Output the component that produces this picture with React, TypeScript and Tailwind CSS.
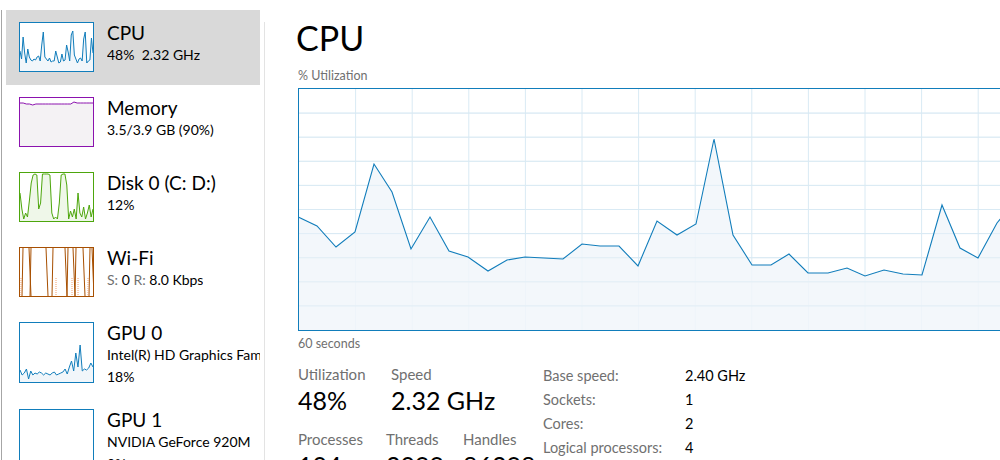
import type { ReactNode } from "react";

const FONT = { fontFamily: '"Segoe UI", Lato, "Noto Sans", sans-serif' };

// main graph points, page coords
const cpuPoints: [number, number][] = [
  [298, 217], [317, 226], [336, 247], [355, 232], [374, 164], [392, 192],
  [411, 249], [430, 217], [449, 251], [468, 257], [488, 271], [507, 260],
  [525, 257], [544, 258], [563, 259], [582, 244], [600, 246], [619, 246],
  [638, 266], [657, 221], [677, 235], [696, 224], [714, 139], [733, 235],
  [752, 265], [771, 265], [789, 254], [808, 273], [828, 273], [847, 268],
  [865, 276], [884, 270], [903, 274], [922, 275], [942, 205], [960, 248],
  [978, 258], [997, 223], [1016, 200],
];

const toLine = (pts: [number, number][]) => pts.map((p) => p.join(",")).join(" ");

const toArea = (pts: [number, number][], bottom: number) =>
  `${pts[0][0]},${bottom} ${toLine(pts)} ${pts[pts.length - 1][0]},${bottom}`;

// small thumbnail series (x across 0..73, y 0..48)
const spread = (ys: number[], w = 73): [number, number][] =>
  ys.map((y, i) => [(i * w) / (ys.length - 1), y]);

const cpuThumb = spread([
  28, 36, 14, 30, 40, 26, 34, 37, 38, 36, 37, 34, 33, 38, 22, 9, 34, 36,
  38, 35, 39, 38, 38, 28, 34, 40, 39, 31, 38, 37, 22, 29, 38, 12, 8, 32,
  36, 40, 36, 35, 38, 16, 9, 40, 38, 37, 15, 30,
]);
const memThumb = spread([5, 5, 6, 6, 7, 6, 6, 6, 6, 6, 6, 6, 6, 6, 6, 6, 6, 4, 5, 5, 5, 5, 5, 5]);
const diskThumb = spread([
  20, 36, 46, 40, 44, 28, 10, 2, 1, 2, 36, 30, 1, 1, 1, 1, 2, 40, 46, 44,
  46, 30, 2, 1, 1, 12, 46, 38, 44, 36, 46, 20, 40, 44, 34, 46, 40, 32, 44, 36,
]);
const gpuThumb = spread([
  47, 52, 50, 46, 56, 48, 52, 50, 51, 49, 50, 52, 50, 51, 52, 50, 49, 52, 51,
  50, 49, 46, 51, 44, 38, 48, 30, 44, 22, 48, 46, 47, 45, 40, 44,
]);

function Thumb({ color, h = 50, children }: { color: string; h?: number; children?: ReactNode }) {
  return (
    <div className="w-[75px] shrink-0 border bg-white" style={{ borderColor: color, height: h }}>
      <svg width="73" height={h - 2} viewBox={`0 0 73 ${h - 2}`} className="block">
        {children}
      </svg>
    </div>
  );
}

function Series({
  pts,
  color,
  fill,
  bottom,
}: {
  pts: [number, number][];
  color: string;
  fill: string;
  bottom: number;
}) {
  return (
    <>
      <polygon points={toArea(pts, bottom)} fill={fill} />
      <polyline points={toLine(pts)} fill="none" stroke={color} strokeWidth="1" />
    </>
  );
}

function SideItem({
  title,
  thumb,
  selected,
  children,
  h = 75,
}: {
  title: string;
  thumb: ReactNode;
  selected?: boolean;
  children: ReactNode;
  h?: number;
}) {
  return (
    <div
      className={`flex gap-[13px] pl-[13px] pt-[12px] shrink-0 ${selected ? "bg-[#d9d9d9]" : ""}`}
      style={{ height: h }}
    >
      {thumb}
      <div className="flex flex-col text-[#000] whitespace-nowrap overflow-hidden -mt-[1px]">
        <div className="text-[19px] leading-[23px]">{title}</div>
        {children}
      </div>
    </div>
  );
}

const Sub = ({ children }: { children: ReactNode }) => (
  <div className="text-[14px] leading-[22px]">{children}</div>
);

function Sidebar() {
  return (
    <div className="w-[264px] shrink-0 pt-[10px] flex">
      <div className="w-px bg-[#a6a6a6] ml-px shrink-0" />
      <div className="flex flex-col ml-[4px] w-[254px]">
        <SideItem
          selected
          title="CPU"
          thumb={
            <Thumb color="#117dbb">
              <Series pts={cpuThumb} color="#117dbb" fill="#f1f6fa" bottom={48} />
            </Thumb>
          }
        >
          <Sub>48%&nbsp;&nbsp;2.32 GHz</Sub>
        </SideItem>
        <SideItem
          title="Memory"
          thumb={
            <Thumb color="#8b12ae">
              <Series pts={memThumb} color="#8b12ae" fill="#f4f2f4" bottom={48} />
            </Thumb>
          }
        >
          <Sub>3.5/3.9 GB (90%)</Sub>
        </SideItem>
        <SideItem
          title="Disk 0 (C: D:)"
          thumb={
            <Thumb color="#4da60c">
              <Series pts={diskThumb} color="#4da60c" fill="#eff7e9" bottom={48} />
            </Thumb>
          }
        >
          <Sub>12%</Sub>
        </SideItem>
        <SideItem
          title="Wi-Fi"
          thumb={
            <Thumb color="#a74f01">
              {[3, 9, 11, 26, 33, 45, 48, 53, 56, 63, 70, 72].map((x, i) => (
                <line
                  key={x}
                  x1={x}
                  y1={0}
                  x2={x + (i % 2 ? 2 : -1)}
                  y2={48}
                  stroke="#a74f01"
                  strokeWidth="1"
                />
              ))}
              {[1, 36, 52, 58, 68].map((x) => (
                <line
                  key={x}
                  x1={x}
                  y1={30}
                  x2={x}
                  y2={48}
                  stroke="#f0a070"
                  strokeWidth="1"
                  strokeDasharray="1 1"
                />
              ))}
            </Thumb>
          }
        >
          <Sub>
            <span className="text-[#707070]">S:</span> 0 <span className="text-[#707070]">R:</span> 8.0 Kbps
          </Sub>
        </SideItem>
        <SideItem
          h={87}
          title="GPU 0"
          thumb={
            <Thumb color="#117dbb" h={61}>
              <Series pts={gpuThumb} color="#117dbb" fill="#f1f6fa" bottom={59} />
            </Thumb>
          }
        >
          <Sub>Intel(R) HD Graphics Family</Sub>
          <Sub>18%</Sub>
        </SideItem>
        <SideItem title="GPU 1" h={87} thumb={<Thumb color="#117dbb" h={61} />}>
          <Sub>NVIDIA GeForce 920M</Sub>
          <Sub>0%</Sub>
        </SideItem>
      </div>
    </div>
  );
}

function UsageGraph() {
  const vlines = Array.from({ length: 12 }, (_, i) => 299 + (i + 1) * 56.6);
  const hlines = Array.from({ length: 9 }, (_, i) => 89 + (i + 1) * 24.1);
  return (
    <div className="w-[712px] h-[243px] border border-[#117dbb] shrink-0">
      <svg width="710" height="241" viewBox="299 89 710 241" className="block">
        {vlines.map((x) => (
          <line key={x} x1={x} y1={89} x2={x} y2={330} stroke="#d9eaf4" strokeWidth="1" />
        ))}
        {hlines.map((y) => (
          <line key={y} x1={299} y1={y} x2={1009} y2={y} stroke="#d9eaf4" strokeWidth="1" />
        ))}
        <polygon points={toArea(cpuPoints, 330)} fill="#f1f6fa" fillOpacity="0.85" />
        {hlines.map((y) => (
          <line key={"o" + y} x1={299} y1={y} x2={1009} y2={y} stroke="#d9eaf4" strokeWidth="1" strokeOpacity="0.6" />
        ))}
        <polyline points={toLine(cpuPoints)} fill="none" stroke="#117dbb" strokeWidth="1.1" />
      </svg>
    </div>
  );
}

const Stat = ({ label, value, w }: { label: string; value: string; w: string }) => (
  <div className={`flex flex-col ${w}`}>
    <div className="text-[15px] leading-[20px] text-[#707070]">{label}</div>
    <div className="text-[25px] leading-[32px] text-[#000] whitespace-nowrap">{value}</div>
  </div>
);

const Spec = ({ label, value }: { label: string; value: string }) => (
  <>
    <div className="text-[#707070]">{label}</div>
    <div className="text-[#000]">{value}</div>
  </>
);

export default function App() {
  return (
    <div className="w-[1000px] h-[460px] overflow-hidden bg-white flex" style={FONT}>
      <Sidebar />
      <div className="w-px bg-[#e3e3e3] mt-[22px] shrink-0" />
      <div className="flex flex-col pl-[33px] pt-[16px] shrink-0 w-[735px]">
        <div className="text-[34px] leading-[44px] text-[#000] -ml-[2px]">CPU</div>
        <div className="text-[12.5px] leading-[17px] text-[#707070] mt-[7px] mb-[4px]">% Utilization</div>
        <UsageGraph />
        <div className="text-[12.5px] leading-[17px] text-[#707070] mt-[4px]">60 seconds</div>
        <div className="flex items-start mt-[12px]">
          <div className="flex flex-col w-[245px]">
            <div className="flex">
              <Stat label="Utilization" value="48%" w="w-[93px]" />
              <Stat label="Speed" value="2.32 GHz" w="w-[140px]" />
            </div>
            <div className="flex mt-[13px]">
              <Stat label="Processes" value="104" w="w-[88px]" />
              <Stat label="Threads" value="2099" w="w-[77px]" />
              <Stat label="Handles" value="86298" w="w-[80px]" />
            </div>
          </div>
          <div className="grid grid-cols-[142px_auto] auto-rows-[24px] content-start text-[14.5px] leading-[24px]">
            <Spec label="Base speed:" value="2.40 GHz" />
            <Spec label="Sockets:" value="1" />
            <Spec label="Cores:" value="2" />
            <Spec label="Logical processors:" value="4" />
          </div>
        </div>
      </div>
    </div>
  );
}
